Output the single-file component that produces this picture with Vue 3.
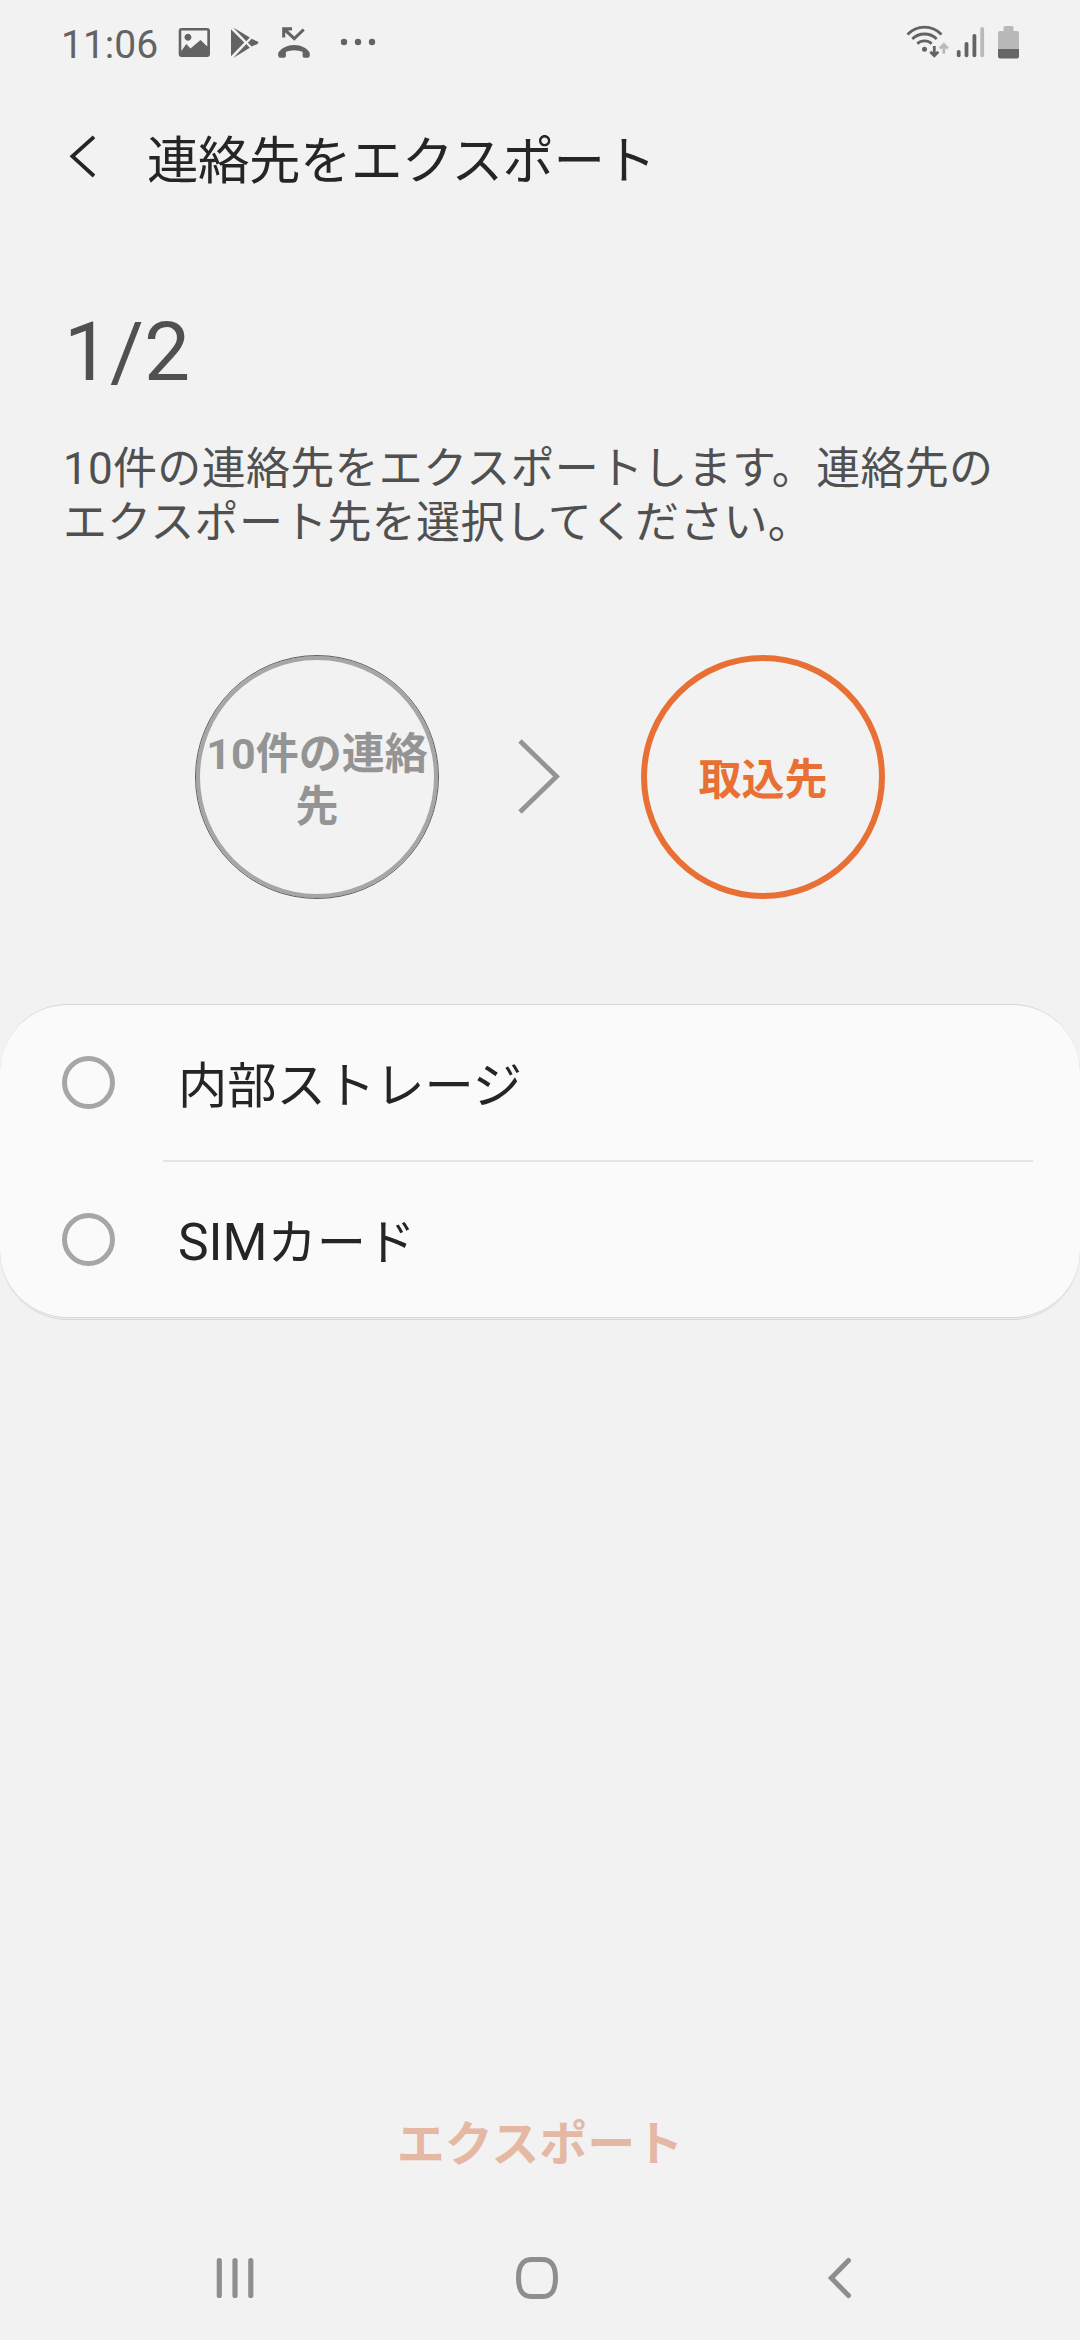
<script setup>
const options = [
  { latin: '', label: '内部ストレージ' },
  { latin: 'SIM', label: 'カード' },
]
</script>

<template>
  <div class="screen" lang="ja">
    <header class="status">
      <span class="time">11:06</span>
      <svg class="notif" width="208" height="40" viewBox="176 22 208 40">
        <path fill="#636363" fill-rule="evenodd" d="M181.500 28H207Q210 28 210 31V54Q210 57 207 57H181.500Q178.700 57 178.700 54V31Q178.700 28 181.500 28ZM181.300 30.500V51L186.300 44L190.500 48.500L200.500 40L207.300 46.500V30.500ZM188 33.800A3.500 3.500 0 1 1 187.900 33.800Z" />
        <g fill="#636363">
          <path d="M231 29.200L244.300 42.500L231 56.200Z" />
          <path d="M233.200 27.500L249.800 37.500L246.300 41.200Z" />
          <path d="M233.200 58L249.800 47.800L246.300 44Z" />
          <path d="M251.600 38.800L257.500 41.500Q259.300 42.700 257.500 43.900L251.600 46.600L247.900 42.700Z" />
        </g>
        <path fill="none" stroke="#636363" stroke-width="3.100" d="M303.700 29.500L294.300 38.600L284.500 29.500M283.700 37.500V28.900H292" />
        <path fill="#636363" d="M278.200 55.500V53C281 48 287.500 45 294.200 45S307.500 48 309.800 53V55.500Q309.800 57.800 307.500 57.800H304.500Q302.600 57.800 302.600 56V51.700Q294.200 48.600 285.900 51.700V56Q285.900 57.800 284 57.800H280.500Q278.200 57.800 278.200 55.500Z" />
        <g fill="#636363"><circle cx="344" cy="42" r="3.200" /><circle cx="358" cy="42" r="3.200" /><circle cx="372" cy="42" r="3.200" /></g>
      </svg>
      <svg class="system" width="120" height="40" viewBox="904 22 120 40">
        <g fill="none" stroke="#636363" stroke-width="2.800">
          <path d="M907.500 34.500C917 24.800 932 24.800 941.500 34.500" />
          <path d="M912.300 39C919 32.300 930 32.300 936.700 39" />
          <path d="M917.300 43.700C921.400 39.900 927.600 39.900 931.700 43.700" />
          <path d="M934.300 46V55.500M930.300 51.800L934.300 55.700L938.300 51.800" />
          <path stroke="#b9b9b9" d="M943.800 53.800V45M939.800 48.500L943.800 44.500L947.800 48.500" />
        </g>
        <circle cx="924.500" cy="49.300" r="2.500" fill="#636363" />
        <g fill="#636363">
          <rect x="956.800" y="50" width="3.800" height="7.300" rx="1.800" />
          <rect x="964.600" y="42" width="3.800" height="15.300" rx="1.800" />
          <rect x="972.500" y="34" width="3.800" height="23.300" rx="1.800" />
        </g>
        <rect x="980.300" y="27" width="3.800" height="30.300" rx="1.800" fill="#b9b9b9" />
        <path fill="#b9b9b9" d="M1005 26H1012Q1013.500 26 1013.500 27.500V31H1017Q1019 31 1019 33V49H998V33Q998 31 1000 31H1003.500V27.500Q1003.500 26 1005 26Z" />
        <path fill="#666" d="M998 49H1019V56.500Q1019 58.500 1017 58.500H1000Q998 58.500 998 56.500Z" />
      </svg>
    </header>

    <div class="titlebar">
      <svg width="28" height="46" viewBox="69 133 28 46">
        <path d="M94 136.800L72.400 156.300L94 176" fill="none" stroke="#252525" stroke-width="3.800" />
      </svg>
      <h1>連絡先をエクスポート</h1>
    </div>

    <section class="intro">
      <div class="count">1/2</div>
      <p>10件の連絡先をエクスポートします。連絡先の<br />エクスポート先を選択してください。</p>
    </section>

    <section class="steps">
      <div class="step done"><span>10件の連絡<br />先</span></div>
      <svg width="46" height="80" viewBox="516 737 46 80">
        <path d="M520 741L556.500 776.500L520 812" fill="none" stroke="#949494" stroke-width="4.800" />
      </svg>
      <div class="step current"><span>取込先</span></div>
    </section>

    <main class="card">
      <div v-for="o in options" :key="o.label" class="option">
        <i class="radio"></i>
        <div class="label"><span class="latin">{{ o.latin }}</span>{{ o.label }}</div>
      </div>
    </main>

    <footer class="action">エクスポート</footer>

    <nav class="nav">
      <svg width="40" height="44" viewBox="215 2256 40 44">
        <path d="M219.300 2260.500V2295.500M235 2260.500V2295.500M250.800 2260.500V2295.500" stroke="#8e8e8e" stroke-width="5.200" stroke-linecap="round" />
      </svg>
      <svg width="44" height="44" viewBox="515 2256 44 44">
        <path d="M532 2259.500H542C551 2259.500 555.500 2265 555.500 2278S551 2296.500 542 2296.500H532C523 2296.500 518.500 2291 518.500 2278S523 2259.500 532 2259.500Z" fill="none" stroke="#8e8e8e" stroke-width="5" />
      </svg>
      <svg width="28" height="44" viewBox="826 2256 28 44">
        <path d="M848.500 2260.500L831.300 2278L848.500 2295.500" fill="none" stroke="#8e8e8e" stroke-width="5" stroke-linecap="round" />
      </svg>
    </nav>
  </div>
</template>

<style>
body {
  background: #f2f2f2;
}
</style>

<style scoped>
.screen {
  width: 1080px;
  height: 2340px;
  display: flex;
  flex-direction: column;
  overflow: hidden;
  background: #f2f2f2;
  font-family: Roboto, "Noto Sans CJK JP", sans-serif;
  color: #252525;
}
svg {
  display: block;
  flex: none;
}
.status {
  height: 62px;
  padding: 22px 56px 0 61px;
  box-sizing: border-box;
  display: flex;
  flex: none;
}
.time {
  width: 115px;
  font-size: 39px;
  line-height: 46px;
  color: #636363;
}
.system {
  margin-left: auto;
}
.titlebar {
  height: 198px;
  padding: 71px 0 0 69px;
  box-sizing: border-box;
  display: flex;
  flex: none;
}
h1 {
  margin: -5px 0 0 50px;
  font-size: 51.500px;
  line-height: 68px;
  font-weight: 400;
  letter-spacing: -0.500px;
}
.intro {
  height: 395px;
  padding: 42px 0 0 64px;
  box-sizing: border-box;
  flex: none;
  color: #505050;
}
.count {
  font-size: 82px;
  line-height: 100px;
}
p {
  margin: 40px 0 0 -1px;
  font-size: 44px;
  line-height: 54px;
  letter-spacing: 0.300px;
  white-space: nowrap;
}
.steps {
  height: 349px;
  padding-left: 195px;
  box-sizing: border-box;
  display: flex;
  flex: none;
}
.steps svg {
  margin: 82px 79px 0 77px;
}
.step {
  width: 244px;
  height: 244px;
  padding-top: 7px;
  border-radius: 50%;
  box-sizing: border-box;
  display: flex;
  align-items: center;
  justify-content: center;
  text-align: center;
  font-size: 43px;
  line-height: 53px;
  font-weight: 700;
  white-space: nowrap;
}
.done {
  border: 1px solid #606060;
  box-shadow: inset 0 0 0 4px #a6a6a6;
  color: #949494;
}
.current {
  border: 6px solid #e87034;
  color: #e87034;
}
.card {
  height: 316px;
  box-sizing: border-box;
  flex: none;
  background: #fafafa;
  border: 1px solid #d6d6d6;
  border-width: 1px 0;
  border-radius: 68px;
  box-shadow: inset 0 -1px 0 #f0f0f0, inset 0 -2px 0 #d8d8d8;
}
.option {
  height: 155px;
  padding-left: 62px;
  display: flex;
  align-items: center;
}
.option + .option {
  height: 159px;
  background: linear-gradient(#e5e5e5, #e5e5e5) 163px 0 / 870px 2px no-repeat;
}
.radio {
  width: 53px;
  height: 53px;
  box-sizing: border-box;
  border: 5px solid #a6a6a6;
  border-radius: 50%;
}
.label {
  margin-left: 63px;
  padding-top: 6px;
  font-size: 49.300px;
  line-height: 60px;
}
.latin {
  font-size: 51.500px;
}
.action {
  margin-top: 789px;
  height: 72px;
  flex: none;
  text-align: center;
  font-size: 48px;
  line-height: 72px;
  font-weight: 700;
  color: #e4b8a3;
}
.nav {
  margin-top: 75px;
  padding-left: 215px;
  display: flex;
}
.nav svg + svg {
  margin-left: 260px;
}
.nav svg:last-child {
  margin-left: 267px;
}
</style>
